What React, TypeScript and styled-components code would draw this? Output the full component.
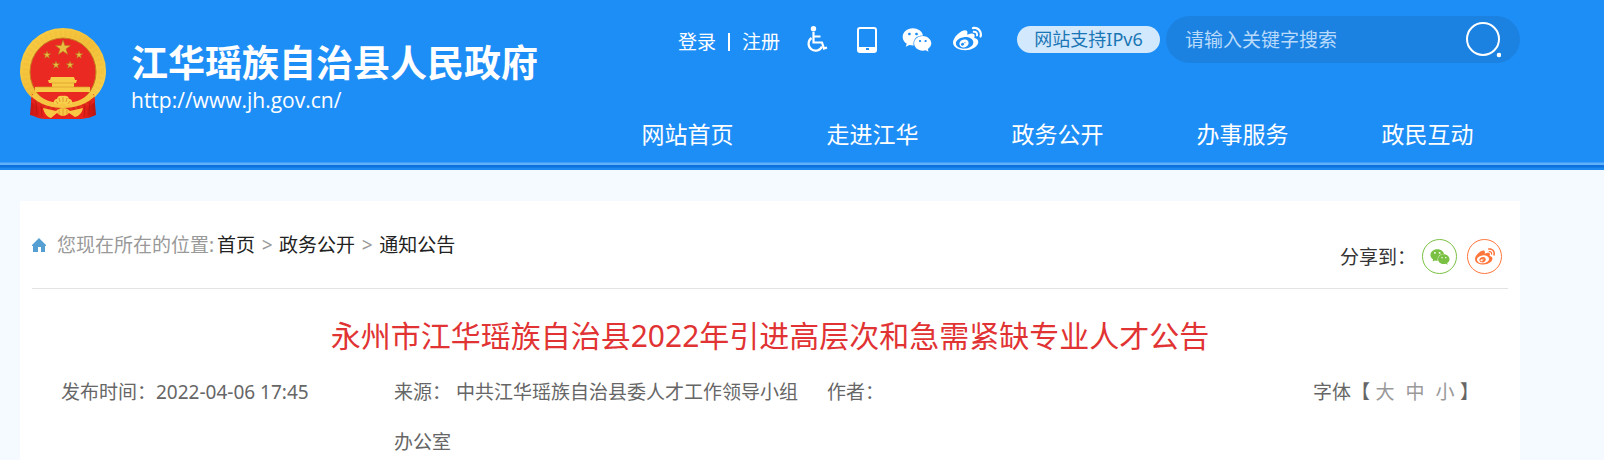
import React from 'react';
import styled, { createGlobalStyle } from 'styled-components';
import { FaWeibo, FaWeixin } from 'react-icons/fa';

const GlobalStyle = createGlobalStyle`
  * { box-sizing: border-box; }
  body {
    margin: 0;
    background: #f4faff;
    color: #333;
    font-family: "Noto Sans", "Noto Sans CJK SC", sans-serif;
    font-size: 19px;
    line-height: 28px;
  }
  a { color: inherit; text-decoration: none; }
  button { font: inherit; color: inherit; background: none; border: 0; padding: 0; cursor: pointer; }
`;

const Page = styled.div`
  display: flex;
  flex-direction: column;
  min-height: 100vh;
`;

const Header = styled.header`
  background: #1e8ef7;
  color: #fff;
`;

const Container = styled.div`
  display: flex;
  justify-content: space-between;
  max-width: 1500px;
  margin-left: 20px;
`;

const Stripe = styled.div`
  height: 8px;
  background: linear-gradient(#3f9ef8 0 1px, #60b0fa 1px 3px, #0d72dd 3px 5px, #117be6 5px 6px, #1c89f1 6px 8px);
`;

const Brand = styled.a`
  display: flex;
  align-items: flex-start;
  gap: 24px;
  padding-top: 28px;
`;

const BrandText = styled.div`
  display: flex;
  flex-direction: column;
  padding-top: 8px;
  white-space: nowrap;
`;

const SiteName = styled.strong`
  font-family: "Noto Sans CJK SC", sans-serif;
  font-size: 37px;
  line-height: 50px;
`;

const SiteUrl = styled.span`
  font-family: "Open Sans", sans-serif;
  font-size: 21px;
  line-height: 28px;
`;

const HeaderSide = styled.div`
  display: flex;
  flex-direction: column;
  gap: 46px;
  align-items: flex-end;
  padding: 16px 0 3px;
`;

const Tools = styled.div`
  display: flex;
  align-items: center;
`;

const Account = styled.div`
  display: flex;
  align-items: center;
  gap: 12px;
  padding: 4px 12px 0 0;
`;

const Bar = styled.span`
  width: 2px;
  height: 18px;
  background: #fff;
`;

const ToolButton = styled.button`
  display: grid;
  place-items: center;
  width: 50px;
  height: 46px;
`;

const Pill = styled.a`
  width: 143px;
  margin: 0 6px 0 25px;
  border-radius: 14px;
  background: #d2e8fd;
  color: #1a76b4;
  font-size: 18px;
  line-height: 27px;
  text-align: center;
`;

const Search = styled.form`
  display: flex;
  align-items: center;
  width: 354px;
  height: 47px;
  padding: 0 19px;
  border-radius: 24px;
  background: #1b82e2;
`;

const SearchInput = styled.input`
  flex: 1;
  min-width: 0;
  padding: 0;
  border: 0;
  outline: 0;
  background: none;
  color: #fff;
  font: inherit;
  &::placeholder { color: #b9dafa; opacity: 1; }
`;

const SearchButton = styled.button`
  display: grid;
`;

const Nav = styled.nav`
  display: flex;
`;

const NavLink = styled.a`
  width: 185px;
  font-size: 23px;
  line-height: 50px;
  text-align: center;
`;

const Panel = styled.main`
  flex: 1;
  max-width: 1500px;
  margin: 31px 0 0 20px;
  padding: 0 12px;
  background: #fff;
`;

const PanelTop = styled.div`
  display: flex;
  justify-content: space-between;
  align-items: flex-start;
  padding-bottom: 14px;
  border-bottom: 1px solid #e3e3e3;
`;

const Crumbs = styled.nav`
  display: flex;
  align-items: center;
  padding-top: 30px;
  color: #999;
`;

const CrumbLabel = styled.span`
  margin: 0 3px 0 11px;
`;

const CrumbLink = styled.a`
  color: #222;
`;

const CrumbArrow = styled.span`
  width: 24px;
  text-align: center;
`;

const Share = styled.div`
  display: flex;
  align-items: center;
  padding: 38px 6px 0 0;
`;

const ShareLabel = styled.span`
  margin-right: 6px;
`;

const ShareButton = styled.button<{ $tone: string }>`
  display: grid;
  place-items: center;
  width: 35px;
  height: 35px;
  border: 1px solid ${(p) => p.$tone};
  border-radius: 50%;
  color: ${(p) => p.$tone};
  & + & { margin-left: 10px; }
`;

const Title = styled.h1`
  margin: 22px 0 6px;
  color: #e13333;
  font-size: 30px;
  font-weight: 400;
  line-height: 50px;
  text-align: center;
`;

const Meta = styled.div`
  display: grid;
  grid-template-columns: 313px 413px 1fr auto;
  column-gap: 20px;
  padding: 0 29px;
  color: #666;
  line-height: 50px;
`;

const FontSize = styled.div`
  display: flex;
  align-items: flex-start;
`;

const SizeButton = styled.button`
  width: 30px;
  color: #999;
  line-height: 50px;
  text-align: center;
`;

const starPath = (cx: number, cy: number, r: number) => {
  const pts = Array.from({ length: 10 }, (_, i) => {
    const a = -Math.PI / 2 + (i * Math.PI) / 5;
    const d = i % 2 ? r * 0.4 : r;
    return `${cx + d * Math.cos(a)},${cy + d * Math.sin(a)}`;
  });
  return `M${pts.join('L')}Z`;
};

const Emblem = () => (
  <svg width="87" height="92" viewBox="0 0 87 92" aria-hidden="true">
    <defs>
      <linearGradient id="gold" x1="0" y1="0" x2="1" y2="1">
        <stop offset="0" stopColor="#f9cf45" />
        <stop offset="0.5" stopColor="#f3c03a" />
        <stop offset="1" stopColor="#fad64f" />
      </linearGradient>
      <linearGradient id="red" x1="0" y1="0" x2="1" y2="0">
        <stop offset="0" stopColor="#c91712" />
        <stop offset="0.2" stopColor="#e9231c" />
        <stop offset="0.8" stopColor="#e9231c" />
        <stop offset="1" stopColor="#b9150f" />
      </linearGradient>
    </defs>
    <path d="M12 64l31 14 31-14 2 23c-4 1-6 3-9 3l-5 1H24c-5 0-9-3-14-4z" fill="url(#red)" />
    <path d="M43 0a43 43 0 0 1 43 43c0 10-4 19-11 26-8 7-20 11-32 11S19 76 11 69C4 62 0 53 0 43A43 43 0 0 1 43 0z" fill="url(#gold)" />
    <path d="M12 66c8 7 18 11 31 11s23-4 31-11l1 8c-8 7-19 10-32 10s-24-3-32-10z" fill="#e2211b" />
    <circle cx="43" cy="43.500" r="38" fill="none" stroke="#e2a72c" strokeWidth="6" strokeDasharray="3 2" opacity="0.15" />
    <ellipse cx="43" cy="44" rx="33" ry="34" fill="#ea2a22" stroke="#c4801f" />
    <g fill="#e9bd3e" stroke="#b1701c" strokeWidth="0.5">
      <path d={starPath(43, 20, 8)} />
      <path d={starPath(27, 27, 4)} />
      <path d={starPath(59, 27, 4)} />
      <path d={starPath(36, 37, 4)} />
      <path d={starPath(50, 37, 4)} />
    </g>
    <path d="M31 49h23l1 3h2l-1 3h-2v4h16v5H15v-5h17v-4h-3l-1-3h2z" fill="#f8cb46" />
    <path d="M31 55h24M16 59h53" stroke="#d89a2c" strokeWidth="0.7" />
    <path d="M16 65c7 7 16 10 27 10s20-3 27-10l5 3c-8 8-19 12-32 12s-24-4-32-12z" fill="#f6c542" />
    <path d="M34 76c-1-3 1-5 3-5 0-3 4-4 6-3 2-1 6 0 6 3 2 0 4 2 3 5l-5 1-4-2-4 2z" fill="#f9d04c" />
    <path d="M38 76l-2-3m4 1l-1-4m4 4v-5m3 5l1-4m1 6l2-3" stroke="#d98c22" strokeWidth="0.8" />
    <path d="M23 80l13 3c3-4 11-4 14 0l13-3c-1 5-4 8-8 9l-6-4c-4 4-8 4-12 0l-6 5c-4-1-7-5-8-10z" fill="#f8c844" />
    <path d="M39 81v6m4-7v8m4-7v6" stroke="#dc9527" strokeWidth="0.8" />
    <path d="M16 73l1 14m4-11l1 13m48-16l-1 14m-4-11l-1 13" stroke="#a9110e" strokeWidth="0.8" opacity="0.7" />
  </svg>
);

const WheelchairIcon = () => (
  <svg width="22" height="27" viewBox="0 0 22 27" fill="none" stroke="#fff" strokeWidth="2.200" aria-hidden="true">
    <circle cx="7.500" cy="2.700" r="2.700" fill="#fff" stroke="none" />
    <path d="M7.500 6v10.500h8.500l2 6 3-1M8 10.500h6.500" />
    <path d="M5.500 12a7 7 0 1 0 10.500 8.500" />
  </svg>
);

const TabletIcon = () => (
  <svg width="20" height="26" viewBox="0 0 20 26" fill="none" aria-hidden="true">
    <rect x="1" y="1" width="18" height="24" rx="2" stroke="#fff" strokeWidth="2" />
    <path d="M1 20h18v4H1z" fill="#fff" />
    <rect x="9" y="21" width="3" height="2" fill="#1e8ef7" />
  </svg>
);

const SearchIcon = () => (
  <svg width="35" height="36" viewBox="0 0 35 36" aria-hidden="true">
    <circle cx="17" cy="17" r="16" fill="none" stroke="#fff" strokeWidth="2" />
    <circle cx="33" cy="33" r="2.300" fill="#fff" />
  </svg>
);

const HomeIcon = () => (
  <svg width="14" height="14" viewBox="0 0 14 14" fill="#559fd3" aria-hidden="true">
    <path d="M7 0l7 7v1h-1v6H9V9H6v5H1V8H0V7z" />
  </svg>
);

const navItems = ['网站首页', '走进江华', '政务公开', '办事服务', '政民互动'];
const crumbs = ['首页', '政务公开', '通知公告'];
const sizes = ['大', '中', '小'];

export default function App() {
  return (
    <Page>
      <GlobalStyle />
      <Header>
        <Container>
          <Brand href="#">
            <Emblem />
            <BrandText>
              <SiteName>江华瑶族自治县人民政府</SiteName>
              <SiteUrl>http://www.jh.gov.cn/</SiteUrl>
            </BrandText>
          </Brand>
          <HeaderSide>
            <Tools>
              <Account>
                <a href="#">登录</a>
                <Bar />
                <a href="#">注册</a>
              </Account>
              <ToolButton aria-label="无障碍"><WheelchairIcon /></ToolButton>
              <ToolButton aria-label="手机版"><TabletIcon /></ToolButton>
              <ToolButton aria-label="微信"><FaWeixin size={30} /></ToolButton>
              <ToolButton aria-label="微博"><FaWeibo size={29} /></ToolButton>
              <Pill href="#">网站支持IPv6</Pill>
              <Search>
                <SearchInput type="text" aria-label="搜索" placeholder="请输入关键字搜索" />
                <SearchButton type="submit" aria-label="搜索"><SearchIcon /></SearchButton>
              </Search>
            </Tools>
            <Nav>
              {navItems.map((item) => (
                <NavLink key={item} href="#">{item}</NavLink>
              ))}
            </Nav>
          </HeaderSide>
        </Container>
        <Stripe />
      </Header>
      <Panel>
        <PanelTop>
          <Crumbs>
            <HomeIcon />
            <CrumbLabel>您现在所在的位置:</CrumbLabel>
            {crumbs.map((item, i) => (
              <React.Fragment key={item}>
                {i > 0 && <CrumbArrow>&gt;</CrumbArrow>}
                <CrumbLink href="#">{item}</CrumbLink>
              </React.Fragment>
            ))}
          </Crumbs>
          <Share>
            <ShareLabel>分享到：</ShareLabel>
            <ShareButton $tone="#7ac143" aria-label="分享到微信"><FaWeixin size={20} /></ShareButton>
            <ShareButton $tone="#ff763b" aria-label="分享到微博"><FaWeibo size={20} /></ShareButton>
          </Share>
        </PanelTop>
        <Title>永州市江华瑶族自治县2022年引进高层次和急需紧缺专业人才公告</Title>
        <Meta>
          <span>发布时间：2022-04-06 17:45</span>
          <span>来源： 中共江华瑶族自治县委人才工作领导小组办公室</span>
          <span>作者：</span>
          <FontSize>
            <span>字体【</span>
            {sizes.map((size) => (
              <SizeButton key={size}>{size}</SizeButton>
            ))}
            <span>】</span>
          </FontSize>
        </Meta>
      </Panel>
    </Page>
  );
}
